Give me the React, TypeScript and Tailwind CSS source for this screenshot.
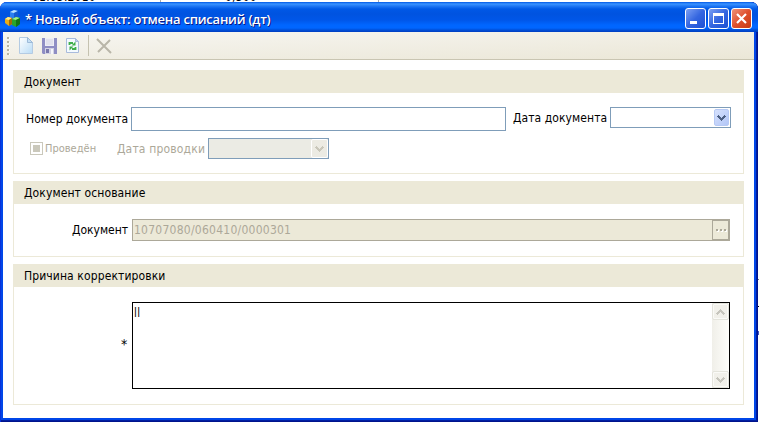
import type { ReactNode } from 'react';

function Chevron({ color, up = false }: { color: string; up?: boolean }) {
  return (
    <svg width="9" height="6" viewBox="0 0 9 6" className={up ? 'rotate-180' : ''} shapeRendering="crispEdges">
      <path
        fill={color}
        d="M1 0h1v1h1v1h1v1h1v-1h1v-1h1v-1h1v1h1v1h-1v1h-1v1h-1v1h-1v1h-1v-1h-1v-1h-1v-1h-1v-1h-1v-1h1z"
      />
    </svg>
  );
}

function AppIcon() {
  return (
    <svg width="16" height="17" viewBox="0 0 16 17">
      <path d="M5 2l4-2 4 1v6l-4 2-4-2z" fill="#2a7ff0" />
      <path d="M5 2l4-2 4 1-4 2z" fill="#b9e0ff" />
      <path d="M9 3l4-2v6l-4 2z" fill="#145ad0" />
      <path d="M0 9l3-2 4 1v6l-3 2-4-3z" fill="#e9ad16" />
      <path d="M0 9l3-2 4 1-3 2z" fill="#ffeb86" />
      <path d="M4 10l3-2v6l-3 2z" fill="#a36a08" />
      <path d="M7 9l4-2 4 1v6l-4 3-4-2z" fill="#27a52c" />
      <path d="M7 9l4-2 4 1-4 2z" fill="#a0ef87" />
      <path d="M11 10l4-2v6l-4 3z" fill="#107418" />
    </svg>
  );
}

function NewIcon() {
  return (
    <svg width="14" height="17" viewBox="0 0 14 17">
      <defs>
        <linearGradient id="sheet" x1="0" y1="0" x2="1" y2="1">
          <stop stopColor="#ffffff" />
          <stop offset="1" stopColor="#b9dcf6" />
        </linearGradient>
      </defs>
      <path d="M.5.5h8l5 5v11H.5z" fill="url(#sheet)" stroke="#b4cbe3" />
      <path d="M8.500.5v5h5z" fill="#c4dff5" stroke="#9dbad8" />
    </svg>
  );
}

function SaveIcon() {
  return (
    <svg width="15" height="16" viewBox="0 0 15 16">
      <path d="M0 0h15v16H1l-1-1z" fill="#8f8ec4" />
      <path d="M3 0h9v8H3z" fill="#eeeef6" />
      <path d="M4 2h7M4 4h7M4 6h7" stroke="#d4d4e4" />
      <path d="M3 10h9v6H3z" fill="#d3d3e4" />
      <path d="M4 11h3v4H4z" fill="#7a79ad" />
      <path d="M9 11h2v5H9z" fill="#f6f6fb" />
    </svg>
  );
}

function RefreshIcon() {
  return (
    <svg width="13" height="15" viewBox="0 0 13 15">
      <path d="M.5.5h9l3 3v11H.5z" fill="#f4faff" stroke="#a9bbdc" />
      <path d="M9.500.5v3h3z" fill="#bdd1ec" stroke="#a9bbdc" />
      <path d="M3.500 7V5H7" fill="none" stroke="#3fae4c" strokeWidth="1.800" />
      <path d="M9.500 3.500V7.500H5.500z" fill="#3fae4c" />
      <path d="M9.500 9v2H6" fill="none" stroke="#3fae4c" strokeWidth="1.800" />
      <path d="M3.500 12.500V8.500H7.500z" fill="#3fae4c" />
    </svg>
  );
}

function TitleButton({ close = false, children }: { close?: boolean; children: ReactNode }) {
  return (
    <div
      className={`flex h-[21px] w-[21px] items-center justify-center rounded-[3px] border border-white bg-gradient-to-br ${
        close ? 'from-[#ed9278] via-[#df502c] to-[#c63a10]' : 'from-[#7d9ff2] via-[#3566e0] to-[#1c51d4]'
      }`}
    >
      {children}
    </div>
  );
}

function Panel({ title, className, children }: { title: string; className: string; children: ReactNode }) {
  return (
    <section className={`border border-[#ece9d8] bg-white ${className}`}>
      <h2 className="flex h-[22px] items-center bg-[#ece9d8] pl-[10px] tracking-[0.110px]">{title}</h2>
      {children}
    </section>
  );
}

function ScrollButton({ up = false }: { up?: boolean }) {
  return (
    <div className="flex h-[17px] w-full items-center justify-center rounded-[2px] border border-[#e4e4dc] bg-[#f1f0ea] shadow-[inset_0_0_0_1px_#fafaf7]">
      <Chevron color="#c6c5bd" up={up} />
    </div>
  );
}

export default function App() {
  return (
    <div className="flex h-[422px] w-[759px] flex-col overflow-hidden bg-white font-['DejaVu_Sans_Condensed','DejaVu_Sans',sans-serif] text-[12px] leading-[15px] text-black">
      {/* Sliver of the grid behind the dialog */}
      <div className="flex h-[2px] shrink-0 overflow-hidden tracking-[0.200px]">
        <div className="h-[2px] w-[161px] border-r border-[#aaa] pl-[32px]">
          <div className="-mt-[10px]">01.05.2010</div>
        </div>
        <div className="h-[2px] w-[218px] border-r border-[#aaa] pl-[64px]">
          <div className="-mt-[10px]">0,300</div>
        </div>
      </div>
      <div className="flex h-[420px]">
        <div className="flex w-[758px] flex-col rounded-t-[7px] bg-[#0046e8] shadow-[inset_1px_0_#0831d9,inset_-1px_0_#00138c,inset_0_-1px_#00138c,inset_-2px_0_#001ea0,inset_0_-2px_#001ea0]">
          <header className="flex h-[30px] shrink-0 items-center rounded-t-[7px] bg-[linear-gradient(#0058e6_0px,#3a93ff_2px,#2078f5_4px,#0058e6_7px,#0053e0_12px,#0056e8_18px,#0066ff_23px,#0066ff_26px,#004fd8_28px,#003dc0_30px)] pt-[3px] pr-[6px] pl-[5px]">
            <AppIcon />
            <span className="mt-px ml-[4px] font-['Open_Sans',sans-serif] text-[13px] font-semibold tracking-[-0.230px] whitespace-pre text-white [text-shadow:1px_1px_#0a1883]">
              * Новый объект: отмена списаний (дт)
            </span>
            <div className="ml-auto flex gap-[2px]">
              <TitleButton>
                <span className="mt-[8px] mr-[4px] h-[3px] w-[7px] bg-white" />
              </TitleButton>
              <TitleButton>
                <span className="h-[11px] w-[11px] border border-t-[3px] border-white" />
              </TitleButton>
              <TitleButton close>
                <svg width="11" height="11" viewBox="0 0 11 11">
                  <path d="M1 1l9 9M10 1l-9 9" stroke="white" strokeWidth="2.200" />
                </svg>
              </TitleButton>
            </div>
          </header>
          <div className="mr-[4px] mb-[4px] ml-[3px] flex grow flex-col bg-white">
            <div className="flex h-[28px] shrink-0 items-center border-b border-[#c9c5b2] bg-gradient-to-br from-[#f7f6f2] to-[#ebe7d7] pl-[4px]">
              <svg width="3" height="18" viewBox="0 0 3 18" shapeRendering="crispEdges">
                {[0, 4, 8, 12, 16].map((y) => (
                  <g key={y}>
                    <rect x="1" y={y + 1} width="2" height="1" fill="#fff" />
                    <rect x="0" y={y} width="2" height="2" fill="#b8b4a3" />
                  </g>
                ))}
              </svg>
              <div className="ml-[9px] flex items-center">
                <NewIcon />
                <div className="ml-[9px]"><SaveIcon /></div>
                <div className="ml-[9px]"><RefreshIcon /></div>
                <div className="ml-[9px] h-[21px] w-px bg-[#c5c2b0]" />
                <svg className="ml-[7px]" width="17" height="16" viewBox="0 0 17 16">
                  <path d="M1 1l14 14M14 2L2 14" stroke="#b9b6a9" strokeWidth="2" />
                </svg>
              </div>
            </div>
            <main className="flex flex-col px-[10px] pt-[10px]">
              <Panel title="Документ" className="h-[104px]">
                <div className="mt-[14px] flex h-[24px] items-start pl-[12px]">
                  <label className="mt-[5px] w-[105px] tracking-[0.040px] whitespace-nowrap">Номер документа</label>
                  <div className="h-[24px] w-[375px] border border-[#7f9db9] bg-white" />
                  <label className="mt-[4px] ml-[7px] w-[97px] tracking-[0.080px] whitespace-nowrap">Дата документа</label>
                  <div className="flex h-[21px] w-[121px] justify-end border border-[#7f9db9] bg-white p-px">
                    <div className="flex h-[17px] w-[15px] items-center justify-center rounded-[2px] border border-[#b6c9f5] bg-gradient-to-br from-[#d6e1fd] to-[#b2c6f7]">
                      <Chevron color="#4d6185" />
                    </div>
                  </div>
                </div>
                <div className="mt-[7px] flex h-[21px] items-center pl-[16px] text-[#aca899]">
                  <div className="flex h-[13px] w-[13px] items-center justify-center border border-[#cac8bb]">
                    <span className="h-[7px] w-[7px] bg-[#cac8bb]" />
                  </div>
                  <span className="ml-[2px] w-[72px] text-[11px] whitespace-nowrap">Проведён</span>
                  <label className="mt-px w-[91px] tracking-[0.170px] whitespace-nowrap">Дата проводки</label>
                  <div className="flex h-[21px] w-[121px] justify-end border border-[#7f9db9] bg-[#ebebe4]">
                    <div className="flex h-[19px] w-[17px] items-center justify-center rounded-[2px] border border-white bg-[#ecebe3]">
                      <Chevron color="#c9c7ba" />
                    </div>
                  </div>
                </div>
              </Panel>
              <Panel title="Документ основание" className="mt-[7px] h-[76px]">
                <div className="mt-[15px] flex h-[22px] items-center pl-[58px]">
                  <label className="w-[60px] whitespace-nowrap">Документ</label>
                  <div className="flex h-[22px] w-[598px] items-center justify-between border border-[#aca899] bg-[#ece9d8] pl-px text-[#aca899]">
                    <span className="tracking-[0.250px]">10707080/060410/0000301</span>
                    <div className="flex h-[20px] w-[17px] items-center justify-center gap-[2px] border border-t-0 border-[#aca899] shadow-[inset_0_1px_#aca899]">
                      <i className="h-[2px] w-[2px] bg-[#aca899] shadow-[1px_1px_white]" />
                      <i className="h-[2px] w-[2px] bg-[#aca899] shadow-[1px_1px_white]" />
                      <i className="h-[2px] w-[2px] bg-[#aca899] shadow-[1px_1px_white]" />
                    </div>
                  </div>
                </div>
              </Panel>
              <Panel title="Причина корректировки" className="mt-[7px] h-[141px]">
                <div className="mt-[15px] flex h-[87px] items-center pl-[107px]">
                  <label className="mb-[3px] w-[11px] text-[14px]">*</label>
                  <div className="flex h-[87px] w-[598px] justify-between border border-black bg-white pl-[1px]">
                    <span className="mt-[1px] font-['Liberation_Sans',sans-serif] text-[11px] tracking-[0.500px]">||</span>
                    <div className="flex w-[17px] flex-col justify-between bg-gradient-to-r from-[#f0efe9] to-[#fefefb]">
                      <ScrollButton up />
                      <ScrollButton />
                    </div>
                  </div>
                </div>
              </Panel>
            </main>
          </div>
        </div>
        <div className="flex w-px flex-col pt-[277px]">
          <span className="h-px bg-[#777]" />
          <span className="mt-[26px] h-px bg-black" />
          <span className="mt-[24px] h-[4px] bg-[#4454c4]" />
        </div>
      </div>
    </div>
  );
}
